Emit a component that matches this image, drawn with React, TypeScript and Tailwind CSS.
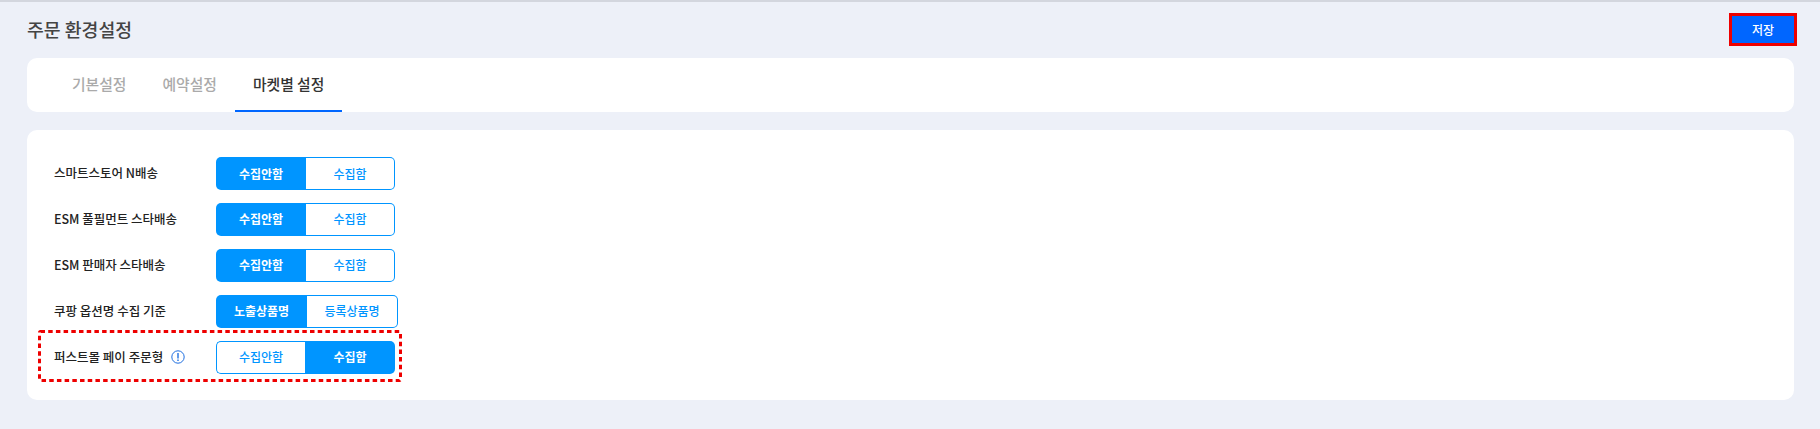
const font = '[font-family:"Noto_Sans_CJK_KR",sans-serif]';

type RowProps = {
  label: string;
  left: string;
  right: string;
  active: "left" | "right";
  leftW?: string;
  rightW?: string;
  info?: boolean;
  mt: string;
};

function Segment({ text, on, side, w }: { text: string; on: boolean; side: "l" | "r"; w: string }) {
  const radius = side === "l" ? "rounded-l-[5px]" : "rounded-r-[5px]";
  const state = on
    ? "bg-[#0095ff] text-white font-bold"
    : "bg-white text-[#0095ff] font-medium border border-[#0095ff] " + (side === "l" ? "border-r-0" : "border-l-0");
  return (
    <div className={`flex h-full items-center justify-center text-[12px] ${w} ${radius} ${state}`}>{text}</div>
  );
}

function Row({ label, left, right, active, leftW = "w-[90px]", rightW = "w-[89px]", info, mt }: RowProps) {
  return (
    <div className={`flex h-[33px] items-center ${mt}`}>
      <div className="flex w-[162px] shrink-0 items-center text-[12.5px] font-medium text-[#222222]">
        <span>{label}</span>
        {info && (
          <svg className="ml-[8px]" width="14" height="14" viewBox="0 0 14 14" fill="none">
            <circle cx="7" cy="7" r="6.2" stroke="#1f6fe0" strokeWidth="1" />
            <path d="M7 3V8.4" stroke="#1f6fe0" strokeWidth="1.4" />
            <path d="M7 9.6V11" stroke="#1f6fe0" strokeWidth="1.4" />
          </svg>
        )}
      </div>
      <div className="flex h-full">
        <Segment text={left} on={active === "left"} side="l" w={leftW} />
        <Segment text={right} on={active === "right"} side="r" w={rightW} />
      </div>
    </div>
  );
}

export default function App() {
  return (
    <div className={`flex h-[429px] w-[1820px] flex-col overflow-hidden border-t-2 border-[#d3d6de] bg-[#edf0f8] pr-[26px] pl-[27px] ${font}`}>
      <div className="flex h-[56px] shrink-0 items-start justify-between">
        <h1 className="mt-[13px] text-[18.3px] leading-[28px] font-medium text-[#444444]">주문 환경설정</h1>
        <button className="mt-[11px] -mr-[3px] flex h-[33px] w-[68px] items-center justify-center border-[3px] border-[#ee0000] bg-[#0066ff] text-[12px] font-medium text-white">
          저장
        </button>
      </div>

      <div className="flex h-[54px] shrink-0 rounded-[10px] bg-white pl-[27px]">
        <div className="flex h-full items-center px-[18px] pb-[1px] text-[14.8px] font-medium text-[#aaaaaa]">기본설정</div>
        <div className="flex h-full items-center px-[18px] pb-[1px] text-[14.8px] font-medium text-[#aaaaaa]">예약설정</div>
        <div className="flex h-full items-center justify-center border-b-2 border-[#0066ff] px-[18px] text-[14.8px] font-medium text-[#333333]">
          마켓별 설정
        </div>
      </div>

      <div className="relative mt-[18px] h-[270px] shrink-0 rounded-[10px] bg-white pt-[27px] pl-[27px]">
        <Row label="스마트스토어 N배송" left="수집안함" right="수집함" active="left" mt="" />
        <Row label="ESM 풀필먼트 스타배송" left="수집안함" right="수집함" active="left" mt="mt-[12.5px]" />
        <Row label="ESM 판매자 스타배송" left="수집안함" right="수집함" active="left" mt="mt-[13px]" />
        <Row label="쿠팡 옵션명 수집 기준" left="노출상품명" right="등록상품명" active="left" leftW="w-[91px]" rightW="w-[91px]" mt="mt-[13px]" />
        <Row label="퍼스트몰 페이 주문형" left="수집안함" right="수집함" active="right" leftW="w-[89px]" rightW="w-[90px]" info mt="mt-[13px]" />
        <svg className="absolute top-[200px] left-[11px]" width="364" height="52" fill="none">
          <rect x="1.5" y="1.5" width="361" height="49" rx="1" stroke="#ee0000" strokeWidth="3" strokeDasharray="4.5 3.2" />
        </svg>
      </div>
    </div>
  );
}
